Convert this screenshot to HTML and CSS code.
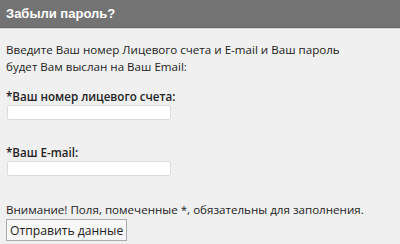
FILE: index.html
```html
<!DOCTYPE html>
<html lang="ru">
<head>
    <meta charset="UTF-8">
    <title>Забыли пароль?</title>
    <link rel="stylesheet" href="styles.css">
</head>
<body>
    <div class="box">
        <div class="box-title">Забыли пароль?</div>
        <div class="box-body">
            <p class="intro">Введите Ваш номер Лицевого счета и E-mail и Ваш пароль<br>будет Вам выслан на Ваш Email:</p>

            <div class="field">
                <label for="account">*Ваш номер лицевого счета:</label>
                <input type="text" id="account">
            </div>

            <div class="field">
                <label for="email">*Ваш E-mail:</label>
                <input type="text" id="email">
            </div>

            <p class="note">Внимание! Поля, помеченные *, обязательны для заполнения.</p>
            <button class="btn">Отправить данные</button>
        </div>
    </div>
</body>
</html>
```

FILE: styles.css
```css
body {
    margin: 0;
    background: #f0f0f0;
    font-family: 'Open Sans', sans-serif;
    font-size: 11.6px;
    color: #222;
}

.box-title {
    height: 27px;
    line-height: 27px;
    padding: 0 6px;
    background: #737373;
    color: #fff;
    font-family: 'Liberation Sans', Arial, sans-serif;
    font-weight: bold;
    font-size: 13px;
    border-bottom: 1px solid #666;
    box-shadow: 0 1px 0 #d6d6d6;
}

.box-body {
    padding: 13px 6px 0;
}

.intro {
    margin: 0;
    line-height: 17px;
}

.field {
    margin-top: 13px;
}

.field label {
    display: block;
    font-weight: 600;
    line-height: 17px;
}

.field input {
    display: block;
    width: 160px;
    height: 11px;
    margin: 0 0 0 1px;
    padding: 1px;
    border: 1px solid #dcdcdc;
    border-radius: 2px;
    background: #fff;
}

.field + .field {
    margin-top: 24px;
}

.note {
    margin: 25px 0 0;
    line-height: 17px;
}

.btn {
    margin-top: 1px;
    height: 22px;
    padding: 0 3px;
    background: #f7f7f7;
    border: 1px solid #aaa;
    border-radius: 0;
    font-family: 'Open Sans', sans-serif;
    font-size: 12.2px;
    color: #222;
}
```
